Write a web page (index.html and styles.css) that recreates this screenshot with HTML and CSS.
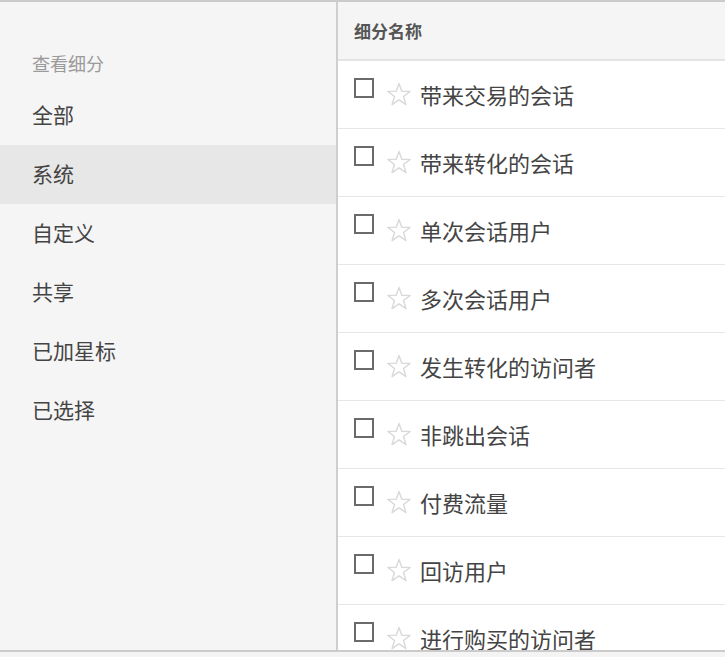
FILE: index.html
```html
<!DOCTYPE html>
<html lang="zh-CN">
<head>
<meta charset="utf-8">
<title>查看细分</title>
<link rel="stylesheet" href="styles.css">
</head>
<body>
<div class="frame">
  <aside class="side">
    <div class="side-label">查看细分</div>
    <ul class="nav">
      <li class="nav-item">全部</li>
      <li class="nav-item active">系统</li>
      <li class="nav-item">自定义</li>
      <li class="nav-item">共享</li>
      <li class="nav-item">已加星标</li>
      <li class="nav-item">已选择</li>
    </ul>
  </aside>
  <main class="list">
    <div class="list-head">细分名称</div>
    <ul class="rows">
      <li class="row"><span class="check"></span><svg class="star" viewBox="0 0 26 25"><polygon points="13,1.5 15.8,9.3 24.2,9.4 17.5,14.5 20,22.6 13,17.8 6,22.6 8.5,14.5 1.8,9.4 10.2,9.3"/></svg><span class="name">带来交易的会话</span></li>
      <li class="row"><span class="check"></span><svg class="star" viewBox="0 0 26 25"><polygon points="13,1.5 15.8,9.3 24.2,9.4 17.5,14.5 20,22.6 13,17.8 6,22.6 8.5,14.5 1.8,9.4 10.2,9.3"/></svg><span class="name">带来转化的会话</span></li>
      <li class="row"><span class="check"></span><svg class="star" viewBox="0 0 26 25"><polygon points="13,1.5 15.8,9.3 24.2,9.4 17.5,14.5 20,22.6 13,17.8 6,22.6 8.5,14.5 1.8,9.4 10.2,9.3"/></svg><span class="name">单次会话用户</span></li>
      <li class="row"><span class="check"></span><svg class="star" viewBox="0 0 26 25"><polygon points="13,1.5 15.8,9.3 24.2,9.4 17.5,14.5 20,22.6 13,17.8 6,22.6 8.5,14.5 1.8,9.4 10.2,9.3"/></svg><span class="name">多次会话用户</span></li>
      <li class="row"><span class="check"></span><svg class="star" viewBox="0 0 26 25"><polygon points="13,1.5 15.8,9.3 24.2,9.4 17.5,14.5 20,22.6 13,17.8 6,22.6 8.5,14.5 1.8,9.4 10.2,9.3"/></svg><span class="name">发生转化的访问者</span></li>
      <li class="row"><span class="check"></span><svg class="star" viewBox="0 0 26 25"><polygon points="13,1.5 15.8,9.3 24.2,9.4 17.5,14.5 20,22.6 13,17.8 6,22.6 8.5,14.5 1.8,9.4 10.2,9.3"/></svg><span class="name">非跳出会话</span></li>
      <li class="row"><span class="check"></span><svg class="star" viewBox="0 0 26 25"><polygon points="13,1.5 15.8,9.3 24.2,9.4 17.5,14.5 20,22.6 13,17.8 6,22.6 8.5,14.5 1.8,9.4 10.2,9.3"/></svg><span class="name">付费流量</span></li>
      <li class="row"><span class="check"></span><svg class="star" viewBox="0 0 26 25"><polygon points="13,1.5 15.8,9.3 24.2,9.4 17.5,14.5 20,22.6 13,17.8 6,22.6 8.5,14.5 1.8,9.4 10.2,9.3"/></svg><span class="name">回访用户</span></li>
      <li class="row"><span class="check"></span><svg class="star" viewBox="0 0 26 25"><polygon points="13,1.5 15.8,9.3 24.2,9.4 17.5,14.5 20,22.6 13,17.8 6,22.6 8.5,14.5 1.8,9.4 10.2,9.3"/></svg><span class="name">进行购买的访问者</span></li>
    </ul>
  </main>
</div>
</body>
</html>
```
FILE: styles.css
```css
* { box-sizing: border-box; }
html, body {
  margin: 0;
  padding: 0;
  background: #f4f4f4;
  font-family: "Noto Sans CJK SC", "Noto Sans", sans-serif;
  color: #444;
}
ul { list-style: none; margin: 0; padding: 0; }

.frame {
  display: flex;
  height: 652px;
  border-top: 2px solid #cbcbcb;
  border-bottom: 2px solid #cbcbcb;
  overflow: hidden;
}

.side {
  width: 338px;
  flex: none;
  background: #f5f5f5;
  border-right: 2px solid #cfcfcf;
  padding-top: 48px;
}
.side-label {
  padding-left: 32px;
  font-size: 18px;
  line-height: 26px;
  color: #9a9a9a;
  margin-bottom: 10px;
}
.nav-item {
  height: 59px;
  display: flex;
  align-items: center;
  padding-left: 32px;
  padding-bottom: 4px;
  font-size: 21px;
  color: #444;
}
.nav-item.active { background: #e7e7e7; }

.list {
  flex: 1;
  min-width: 0;
  background: #fff;
  overflow: hidden;
}
.list-head {
  height: 59px;
  background: #f5f5f5;
  border-bottom: 2px solid #e4e4e4;
  display: flex;
  align-items: center;
  padding-left: 16px;
  padding-bottom: 1px;
  font-size: 17px;
  font-weight: 700;
  color: #555;
}
.row {
  height: 68px;
  border-bottom: 1px solid #e6e6e6;
  display: flex;
  align-items: center;
  padding-left: 16px;
  padding-bottom: 1px;
}
.check {
  width: 20px;
  height: 20px;
  border: 2px solid #6a6a6a;
  background: #fff;
  margin-bottom: 12px;
  flex: none;
}
.star {
  width: 26px;
  height: 25px;
  margin-left: 12px;
  margin-top: 1px;
  flex: none;
}
.star polygon {
  fill: none;
  stroke: #d9d9d9;
  stroke-width: 1.4;
  stroke-linejoin: round;
}
.name {
  margin-left: 8px;
  font-size: 22px;
  color: #444;
  white-space: nowrap;
}
```
